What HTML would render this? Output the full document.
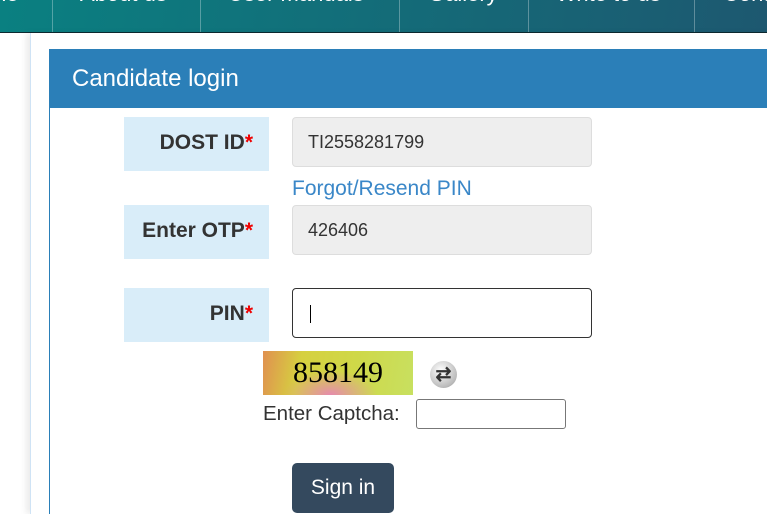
<!DOCTYPE html>
<html><head><meta charset="utf-8"><style>
html,body{margin:0;width:767px;height:514px;overflow:hidden}
body{background:#fff;font-family:"Liberation Sans",sans-serif;position:relative}
.nav{position:absolute;left:0;top:0;width:767px;height:32px;background:linear-gradient(100deg,#0a8081,#1d5870);border-bottom:1px solid #0d2a30;overflow:hidden}
.nav span{position:absolute;top:-19px;color:#fff;font-size:22px;white-space:nowrap}
.nav i{position:absolute;top:0;width:1px;height:32px;background:rgba(255,255,255,.3)}
.cont{position:absolute;left:30px;top:33px;width:760px;height:481px;border-left:1px solid #cfe3f5;box-shadow:-4px 0 6px rgba(0,0,0,.08)}
.panel{position:absolute;left:49px;top:49px;width:730px;height:465px;border-left:1px solid #2a7fb8}
.hd{position:absolute;left:49px;top:49px;width:730px;height:59px;background:#2b7fb8;color:#fff;font-size:24px;line-height:59px;padding-left:23px;box-sizing:border-box}
.lab{position:absolute;left:124px;width:145px;height:54px;background:#d9edf9;font-weight:bold;font-size:21px;color:#333;text-align:right;box-sizing:border-box;padding-right:16px;line-height:52px}
.lab b{color:#e00}
.inp{position:absolute;left:292px;width:300px;height:50px;background:#eee;border:1px solid #ddd;border-radius:4px;box-sizing:border-box;font-size:18px;color:#333;padding-left:15px;line-height:48px}
</style></head><body>
<div class="nav">
<span style="left:-12px">me</span><i style="left:52px"></i>
<span style="left:80px">About us</span><i style="left:200px"></i>
<span style="left:228px">User manuals</span><i style="left:399px"></i>
<span style="left:428px">Gallery</span><i style="left:528px"></i>
<span style="left:556px">Write to us</span><i style="left:694px"></i>
<span style="left:723px">Contact</span>
</div>
<div class="cont"></div>
<div class="panel"></div>
<div class="hd">Candidate login</div>
<div class="lab" style="top:117px">DOST ID<b>*</b></div>
<div class="inp" style="top:117px">TI2558281799</div>
<div style="position:absolute;left:292px;top:177px;color:#3a87c8;font-size:21px">Forgot/Resend PIN</div>
<div class="lab" style="top:205px">Enter OTP<b>*</b></div>
<div class="inp" style="top:205px">426406</div>
<div class="lab" style="top:288px">PIN<b>*</b></div>
<div class="inp" style="top:288px;background:#fff;border:1px solid #333"><span style="display:inline-block;width:1px;height:18px;background:#000;vertical-align:middle;margin-left:2px"></span></div>
<div style="position:absolute;left:263px;top:351px;width:150px;height:44px;background:radial-gradient(ellipse at 45% 100%,rgba(235,120,200,.8),rgba(235,120,200,0) 40%),linear-gradient(100deg,#e09050 0%,#d6d040 25%,#cfd848 60%,#c8e060 100%);font-family:'Liberation Serif',serif;font-size:30px;text-align:center;line-height:44px;color:#000">858149</div>
<div style="position:absolute;left:430px;top:361px;width:27px;height:27px;border-radius:50%;background:radial-gradient(circle at 40% 35%,#fff,#bbb 70%,#888);color:#333;font-size:19px;text-align:center;line-height:27px;font-weight:bold">⇄</div>
<div style="position:absolute;left:263px;top:402px;font-size:20.5px;color:#333">Enter Captcha:</div>
<div style="position:absolute;left:416px;top:399px;width:150px;height:30px;border:1px solid #777;border-radius:3px;box-sizing:border-box"></div>
<div style="position:absolute;left:292px;top:463px;width:102px;height:50px;background:#34495e;border-radius:5px;color:#fff;font-size:21px;text-align:center;line-height:50px">Sign in</div>
</body></html>
